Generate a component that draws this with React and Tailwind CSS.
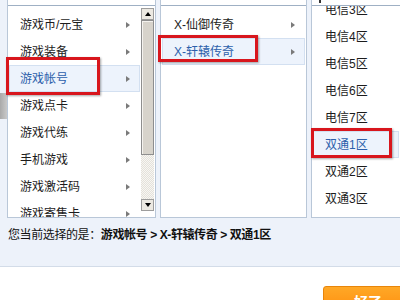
import React from 'react';

const CATS = ['游戏币/元宝', '游戏装备', '游戏帐号', '游戏点卡', '游戏代练', '手机游戏', '游戏激活码', '游戏寄售卡'];
const GAMES = ['X-仙御传奇', 'X-轩辕传奇'];
const ZONES = ['电信3区', '电信4区', '电信5区', '电信6区', '电信7区', '双通1区', '双通2区', '双通3区', '双通4区'];

const Arrow = () => (
  <span className="w-0 h-0 border-y-[3px] border-l-[4px] border-y-transparent border-l-[#7a7a7a]" />
);

const Row = ({ label, active, arrow, padL, padR }) => (
  <div
    className={`flex items-center justify-between h-[27px] mx-[1px] border ${padL} ${padR} ${
      active ? 'bg-[#edf3fc] border-[#d3e0f1] text-[#2c5fab]' : 'border-transparent text-[#1c1c1c]'
    }`}
  >
    <span>{label}</span>
    {arrow && <Arrow />}
  </div>
);

const TopInput = ({ cursor }) => (
  <div className="h-[6px] shrink-0 border-b border-[#9fb0c4] bg-white relative">
    {cursor && <span className="absolute left-[7px] top-0 w-[2px] h-[3px] bg-[#333]" />}
  </div>
);

const Scrollbar = () => (
  <div className="w-[14px] shrink-0 flex flex-col pt-[2px] pb-[6px] pr-[1px]">
    <div className="h-[12px] flex items-center justify-center bg-[#ece9e2] border border-[#9d9d9d]">
      <span className="w-0 h-0 border-x-[3px] border-b-[4px] border-x-transparent border-b-black" />
    </div>
    <div className="h-[135px] bg-[#d7d3cb] border border-[#8e8e8e] shadow-[inset_1px_1px_0_#f4f2ee]" />
    <div className="flex-1 bg-[repeating-conic-gradient(#e4e1da_0_25%,#f7f6f3_0_50%)] bg-[length:2px_2px]" />
    <div className="h-[12px] flex items-center justify-center bg-[#ece9e2] border border-[#9d9d9d]">
      <span className="w-0 h-0 border-x-[3px] border-t-[4px] border-x-transparent border-t-black" />
    </div>
  </div>
);

const RedBox = ({ cls }) => (
  <div className={`absolute border-[3px] border-[#d8161d] shadow-[1px_1px_2px_rgba(0,0,0,0.35)] ${cls}`} />
);

export default function App() {
  return (
    <div className="relative w-[400px] h-[300px] overflow-hidden bg-white text-[12px] leading-[14px] font-['Liberation_Sans','Noto_Sans_CJK_SC',sans-serif]">
      <div className="h-[267px] bg-[#edf2fa] border-b border-[#d3dce8] flex flex-col">
        <div className="flex h-[218px]">
          <div className="w-[7px] shrink-0 pt-[93px]">
            <div className="h-[26px] bg-gradient-to-r from-[#a9a9a9] to-[#c9c9c9]" />
          </div>

          {/* categories */}
          <div className="w-[149px] shrink-0 flex flex-col bg-white border-x border-b border-[#b9c7d8]">
            <TopInput />
            <div className="flex flex-1 min-h-0">
              <div className="flex-1 overflow-hidden pt-[5px]">
                {CATS.map((c) => (
                  <Row key={c} label={c} active={c === '游戏帐号'} arrow padL="pl-[10px]" padR="pr-[9px]" />
                ))}
              </div>
              <Scrollbar />
            </div>
          </div>

          <div className="w-[4px] shrink-0" />

          {/* games */}
          <div className="w-[147px] shrink-0 flex flex-col bg-white border-x border-b border-[#b9c7d8]">
            <TopInput />
            <div className="flex-1 overflow-hidden pt-[5px]">
              {GAMES.map((g) => (
                <Row key={g} label={g} active={g === 'X-轩辕传奇'} arrow padL="pl-[11px]" padR="pr-[9px]" />
              ))}
            </div>
          </div>

          <div className="w-[4px] shrink-0" />

          {/* zones */}
          <div className="flex-1 flex flex-col bg-white border-l border-b border-[#b9c7d8]">
            <TopInput cursor />
            <div className="flex-1 overflow-hidden">
              <div className="-mt-[10px]">
                {ZONES.map((z) => (
                  <Row key={z} label={z} active={z === '双通1区'} padL="pl-[11px]" padR="pr-[9px]" />
                ))}
              </div>
            </div>
          </div>
        </div>

        <div className="mt-[10px] pl-[8px] text-[#111] tracking-[-0.4px]">
          您当前选择的是：<span className="font-bold">游戏帐号 &gt; X-轩辕传奇 &gt; 双通1区</span>
        </div>
      </div>

      <div className="flex justify-end pt-[19px]">
        <button className="w-[90px] h-[32px] -mr-[13px] flex items-center pl-[30px] rounded-[3px] border border-[#e8850a] bg-gradient-to-b from-[#ffa826] to-[#ff8800] text-white text-[14px] font-bold">
          好了
        </button>
      </div>

      <RedBox cls="left-[6px] top-[57px] w-[94px] h-[38px]" />
      <RedBox cls="left-[158px] top-[35px] w-[100px] h-[27px]" />
      <RedBox cls="left-[311px] top-[128px] w-[81px] h-[30px]" />
    </div>
  );
}
